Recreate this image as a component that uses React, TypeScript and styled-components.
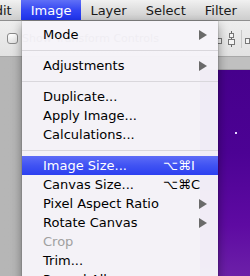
import React from "react";
import styled, { createGlobalStyle } from "styled-components";

const GlobalStyle = createGlobalStyle`
  html, body {
    margin: 0;
    padding: 0;
    background: #b4b4b4;
  }
  * {
    box-sizing: border-box;
  }
`;

type Item =
  | { kind: "sep" }
  | {
      kind: "item";
      label: string;
      shortcut?: string;
      submenu?: boolean;
      active?: boolean;
      disabled?: boolean;
    };

const items: Item[] = [
  { kind: "item", label: "Mode", submenu: true },
  { kind: "sep" },
  { kind: "item", label: "Adjustments", submenu: true },
  { kind: "sep" },
  { kind: "item", label: "Duplicate..." },
  { kind: "item", label: "Apply Image..." },
  { kind: "item", label: "Calculations..." },
  { kind: "sep" },
  { kind: "item", label: "Image Size...", shortcut: "⌥⌘I", active: true },
  { kind: "item", label: "Canvas Size...", shortcut: "⌥⌘C" },
  { kind: "item", label: "Pixel Aspect Ratio", submenu: true },
  { kind: "item", label: "Rotate Canvas", submenu: true },
  { kind: "item", label: "Crop", disabled: true },
  { kind: "item", label: "Trim..." },
  { kind: "item", label: "Reveal All" },
  { kind: "sep" },
  { kind: "item", label: "Variables", submenu: true },
];

const barItems = ["Edit", "Image", "Layer", "Select", "Filter", "Analysis"];

const App = () => {
  return (
    <Screen>
      <GlobalStyle />
      <MenuBar>
        {barItems.map((name) => (
          <BarItem key={name} $open={name === "Image"}>
            {name}
          </BarItem>
        ))}
      </MenuBar>
      <Toolbar>
        <Checkbox />
        <ToolLabel>Show Transform Controls</ToolLabel>
        <AlignIcons width="40" height="20" viewBox="0 0 40 20">
          <rect x="1.5" y="9.5" width="4" height="5" fill="#f4f4f4" stroke="#777" />
          <line x1="15.5" y1="2" x2="15.5" y2="18" stroke="#666" />
          <rect x="13.5" y="4.5" width="4" height="4" fill="#f4f4f4" stroke="#777" />
          <rect x="12.5" y="10.5" width="6" height="5" fill="#f4f4f4" stroke="#777" />
          <line x1="25.5" y1="1" x2="25.5" y2="19" stroke="#c8c8c8" />
          <rect x="29.5" y="9.5" width="4" height="5" fill="#f4f4f4" stroke="#777" />
        </AlignIcons>
      </Toolbar>
      <Stage>
        <Document>
          <DocTab />
          <DocCanvas>
            <Star />
          </DocCanvas>
        </Document>
      </Stage>

      <Dropdown>
        {items.map((it, i) =>
          it.kind === "sep" ? (
            <Separator key={i} />
          ) : (
            <Row key={i} $active={it.active} $disabled={it.disabled}>
              <span>{it.label}</span>
              {it.shortcut && <Shortcut>{it.shortcut}</Shortcut>}
              {it.submenu && <Arrow />}
            </Row>
          )
        )}
      </Dropdown>
    </Screen>
  );
};

export default App;

const Screen = styled.div`
  position: relative;
  width: 250px;
  height: 276px;
  overflow: hidden;
  display: flex;
  flex-direction: column;
  background: #b4b4b4;
  font-family: "DejaVu Sans", "Liberation Sans", sans-serif;
`;

const MenuBar = styled.div`
  height: 21px;
  flex-shrink: 0;
  display: flex;
  align-items: stretch;
  margin-left: -23px;
  background: linear-gradient(180deg, #f1f1f1 0%, #dcdcdc 55%, #cdcdcd 100%);
  border-bottom: 1px solid #8f8f8f;
  white-space: nowrap;
`;

const BarItem = styled.div<{ $open?: boolean }>`
  display: flex;
  align-items: center;
  padding: 0 9.5px;
  font-size: 13px;
  color: ${(p) => (p.$open ? "#ffffff" : "#1a1a1a")};
  background: ${(p) =>
    p.$open
      ? "linear-gradient(180deg, #6070f7 0%, #3447f2 50%, #1e33ee 100%)"
      : "transparent"};
`;

const Toolbar = styled.div`
  height: 36px;
  flex-shrink: 0;
  display: flex;
  align-items: center;
  padding-left: 7px;
  background: linear-gradient(180deg, #eeeeee 0%, #e2e2e2 100%);
  border-bottom: 1px solid #a8a8a8;
  white-space: nowrap;
`;

const Checkbox = styled.div`
  width: 11px;
  height: 11px;
  flex-shrink: 0;
  border: 1px solid #8a8a8a;
  border-radius: 3px;
  background: linear-gradient(180deg, #ffffff, #e4e4e4);
`;

const ToolLabel = styled.span`
  margin-left: 4px;
  font-size: 11px;
  color: #222;
`;

const AlignIcons = styled.svg`
  margin-left: auto;
  margin-right: -6px;
  flex-shrink: 0;
`;

const Stage = styled.div`
  flex: 1;
  display: flex;
  justify-content: flex-end;
  background: linear-gradient(90deg, #b6b6b6 0%, #b4b4b4 100%);
`;

const Document = styled.div`
  width: 50px;
  display: flex;
  flex-direction: column;
`;

const DocTab = styled.div`
  height: 13px;
  flex-shrink: 0;
  background: #c0c0c0;
  border-bottom: 1px solid #a2a2a2;
`;

const DocCanvas = styled.div`
  position: relative;
  flex: 1;
  background: linear-gradient(180deg, #46008c 0%, #4c0294 40%, #5e0aa2 75%, #6c20a8 100%);
`;

const Star = styled.div`
  position: absolute;
  left: 35px;
  top: 62px;
  width: 2px;
  height: 2px;
  background: #e6d8ff;
`;

const Dropdown = styled.div`
  position: absolute;
  left: 22px;
  top: 21px;
  width: 196px;
  padding: 4px 0;
  background: rgba(246, 244, 249, 0.97);
  box-shadow: 0 4px 10px rgba(0, 0, 0, 0.4), 0 0 1px rgba(0, 0, 0, 0.5);
`;

const Row = styled.div<{ $active?: boolean; $disabled?: boolean }>`
  height: 19px;
  display: flex;
  align-items: center;
  padding: 0 11px 0 21px;
  font-size: 13px;
  white-space: nowrap;
  color: ${(p) => (p.$active ? "#ffffff" : p.$disabled ? "#a0a0a0" : "#000000")};
  background: ${(p) =>
    p.$active
      ? "linear-gradient(180deg, #5d6cf7 0%, #4053f3 50%, #2c40f0 100%)"
      : "transparent"};
`;

const Shortcut = styled.span`
  margin-left: auto;
  margin-right: 10px;
  width: 34px;
  text-align: left;
`;

const Arrow = styled.span`
  margin-left: auto;
  width: 0;
  height: 0;
  border-top: 5px solid transparent;
  border-bottom: 5px solid transparent;
  border-left: 8px solid #6a6a6a;
`;

const Separator = styled.div`
  height: 12px;
  display: flex;
  align-items: center;
  &::after {
    content: "";
    flex: 1;
    height: 1px;
    background: #d9d7dc;
  }
`;
